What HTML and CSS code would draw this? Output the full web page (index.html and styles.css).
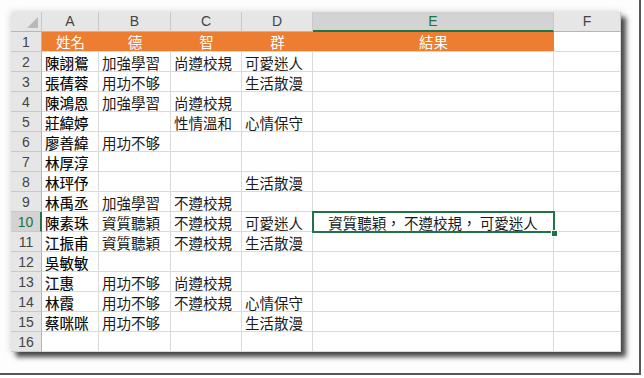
FILE: index.html
```html
<!DOCTYPE html>
<html lang="zh-Hant">
<head>
<meta charset="utf-8">
<title>Sheet</title>
<link rel="stylesheet" href="styles.css">
</head>
<body>
<div class="frame">
  <div class="sheet">
    <div class="corner"><svg width="11" height="11" viewBox="0 0 11 11"><polygon points="11,0 11,11 0,11" fill="#b9b9b9"/></svg></div>
    <div class="ch">A</div><div class="ch">B</div><div class="ch">C</div><div class="ch">D</div><div class="ch chsel">E</div><div class="ch">F</div>

    <div class="rn">1</div><div class="o">姓名</div><div class="o">德</div><div class="o">智</div><div class="o">群</div><div class="o">結果</div><div class="c"></div>

    <div class="rn">2</div><div class="c nm">陳詡鴛</div><div class="c">加強學習</div><div class="c">尚遵校規</div><div class="c">可愛迷人</div><div class="c"></div><div class="c"></div>
    <div class="rn">3</div><div class="c nm">張蒨蓉</div><div class="c">用功不够</div><div class="c"></div><div class="c">生活散漫</div><div class="c"></div><div class="c"></div>
    <div class="rn">4</div><div class="c nm">陳鴻恩</div><div class="c">加強學習</div><div class="c">尚遵校規</div><div class="c"></div><div class="c"></div><div class="c"></div>
    <div class="rn">5</div><div class="c nm">莊緯婷</div><div class="c"></div><div class="c">性情溫和</div><div class="c">心情保守</div><div class="c"></div><div class="c"></div>
    <div class="rn">6</div><div class="c nm">廖善緯</div><div class="c">用功不够</div><div class="c"></div><div class="c"></div><div class="c"></div><div class="c"></div>
    <div class="rn">7</div><div class="c nm">林厚淳</div><div class="c"></div><div class="c"></div><div class="c"></div><div class="c"></div><div class="c"></div>
    <div class="rn">8</div><div class="c nm">林玶伃</div><div class="c"></div><div class="c"></div><div class="c">生活散漫</div><div class="c"></div><div class="c"></div>
    <div class="rn">9</div><div class="c nm">林禹丞</div><div class="c">加強學習</div><div class="c">不遵校規</div><div class="c"></div><div class="c"></div><div class="c"></div>
    <div class="rn rnsel">10</div><div class="c nm">陳素珠</div><div class="c">資質聽穎</div><div class="c">不遵校規</div><div class="c">可愛迷人</div><div class="c sel">資質聽穎， 不遵校規， 可愛迷人</div><div class="c"></div>
    <div class="rn">11</div><div class="c nm">江振甫</div><div class="c">資質聽穎</div><div class="c">不遵校規</div><div class="c">生活散漫</div><div class="c"></div><div class="c"></div>
    <div class="rn">12</div><div class="c nm">吳敏敏</div><div class="c"></div><div class="c"></div><div class="c"></div><div class="c"></div><div class="c"></div>
    <div class="rn">13</div><div class="c nm">江惠</div><div class="c">用功不够</div><div class="c">尚遵校規</div><div class="c"></div><div class="c"></div><div class="c"></div>
    <div class="rn">14</div><div class="c nm">林霞</div><div class="c">用功不够</div><div class="c">不遵校規</div><div class="c">心情保守</div><div class="c"></div><div class="c"></div>
    <div class="rn">15</div><div class="c nm">蔡咪咪</div><div class="c">用功不够</div><div class="c"></div><div class="c">生活散漫</div><div class="c"></div><div class="c"></div>
    <div class="rn">16</div><div class="c nm"></div><div class="c"></div><div class="c"></div><div class="c"></div><div class="c"></div><div class="c"></div>
  </div>
</div>
</body>
</html>
```
FILE: styles.css
```css
html, body {
  margin: 0;
  padding: 0;
  background: #ffffff;
}

.frame {
  box-sizing: border-box;
  width: 641px;
  height: 375px;
  padding: 12px 0 0 11px;
  border-right: 2px solid #575757;
  border-bottom: 2px solid #575757;
  background: #fdfdfd;
}

.sheet {
  display: grid;
  grid-template-columns: 31px 57px 72px 71px 71px 241px 67px;
  grid-auto-rows: 20px;
  width: 610px;
  background: #ffffff;
  box-shadow: 5px 5px 5px rgba(0, 0, 0, 0.7), 0 0 7px rgba(0, 0, 0, 0.18);
}

.sheet > div {
  box-sizing: border-box;
  white-space: nowrap;
}

.corner {
  background: #e6e6e6;
  border-right: 1px solid #c6c6c6;
  border-bottom: 1px solid #b5b5b5;
  display: flex;
  justify-content: flex-end;
  align-items: flex-end;
  padding: 0 3px 3px 0;
}

.corner svg {
  display: block;
}

.ch {
  background: #e6e6e6;
  border-right: 1px solid #c9c9c9;
  border-bottom: 1px solid #b5b5b5;
  color: #444;
  font: 14px/19px "Liberation Sans", Arial, sans-serif;
  text-align: center;
}

.chsel {
  background: #d3d3d3;
  border-bottom: 2px solid #217346;
  color: #217346;
}

.rn {
  background: #e6e6e6;
  border-right: 1px solid #b5b5b5;
  border-bottom: 1px solid #c9c9c9;
  color: #444;
  font: 14px/20px "Liberation Sans", Arial, sans-serif;
  text-align: center;
}

.rnsel {
  background: #d3d3d3;
  border-right: 2px solid #217346;
  color: #217346;
}

.o {
  background: #ed7d31;
  border-bottom: 1px solid #dadada;
  color: #ffffff;
  font: 14.5px/19px "Noto Sans CJK TC", sans-serif;
  text-align: center;
}

.c {
  border-right: 1px solid #dadada;
  border-bottom: 1px solid #dadada;
  color: #1a1a1a;
  font: 14.5px/20px "Noto Sans CJK TC", sans-serif;
  padding: 1px 0 0 3px;
}

.nm {
  color: #000;
  -webkit-text-stroke: 0.15px #000;
}

.sel {
  position: relative;
  text-align: center;
  padding-left: 0;
}

.sel::after {
  content: "";
  position: absolute;
  left: -1px;
  top: -1px;
  right: -2px;
  bottom: -2px;
  border: 2px solid #217346;
}

.sel::before {
  content: "";
  position: absolute;
  right: -5px;
  bottom: -6px;
  width: 5px;
  height: 5px;
  background: #217346;
  border: 1px solid #ffffff;
  z-index: 1;
}
```
